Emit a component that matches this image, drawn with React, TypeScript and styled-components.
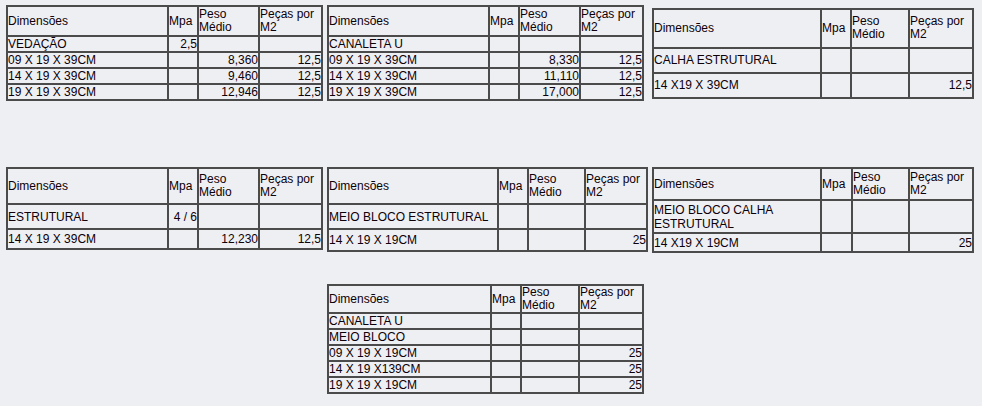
import React from "react";
import styled, { createGlobalStyle } from "styled-components";

const GlobalStyle = createGlobalStyle`
	body {
		margin: 0;
		background: #eeeff3;
	}
`;

const Page = styled.div`
	padding: 5px 0 0 6px;
	font-family: "Liberation Sans", Arial, sans-serif;
	font-size: 12px;
	color: #0d0008;
`;

const Row = styled.div<{ $top: number; $align: string }>`
	display: grid;
	grid-template-columns: 321px 325px 330px;
	align-items: ${(props) => props.$align};
	margin-top: ${(props) => props.$top}px;
`;

const Slot = styled.div<{ $col: number }>`
	grid-column: ${(props) => props.$col};
	display: flex;
`;

const Table = styled.table<{ $width: number }>`
	width: ${(props) => props.$width}px;
	table-layout: fixed;
	border-collapse: separate;
	border-spacing: 0;
	border: 1px solid #4b4b4b;
	box-sizing: border-box;
	font-size: 12px;
	line-height: 14px;
`;

const Line = styled.tr<{ $h: number }>`
	height: ${(props) => props.$h}px;
`;

const Cell = styled.td<{ $num?: boolean; $w?: number }>`
	border: 1px solid #4b4b4b;
	padding: 0;
	box-sizing: border-box;
	vertical-align: middle;
	text-align: ${(props) => (props.$num ? "right" : "left")};
	width: ${(props) => (props.$w ? props.$w + "px" : "auto")};
`;

const HeadCell = styled(Cell)`
	line-height: 13px;
`;

type Spec = {
	col: number;
	width: number;
	cols: number[];
	head: number;
	rows: { h: number; cells: string[] }[];
};

const HEAD = [["Dimensões"], ["Mpa"], ["Peso", "Médio"], ["Peças por", "M2"]];

const row1: Spec[] = [
	{
		col: 1,
		width: 317,
		cols: [161, 30, 61, 63],
		head: 30,
		rows: [
			{ h: 16, cells: ["VEDAÇÃO", "2,5", "", ""] },
			{ h: 16, cells: ["09 X 19 X 39CM", "", "8,360", "12,5"] },
			{ h: 16, cells: ["14 X 19 X 39CM", "", "9,460", "12,5"] },
			{ h: 16, cells: ["19 X 19 X 39CM", "", "12,946", "12,5"] },
		],
	},
	{
		col: 2,
		width: 317,
		cols: [161, 30, 61, 63],
		head: 30,
		rows: [
			{ h: 16, cells: ["CANALETA U", "", "", ""] },
			{ h: 16, cells: ["09 X 19 X 39CM", "", "8,330", "12,5"] },
			{ h: 16, cells: ["14 X 19 X 39CM", "", "11,110", "12,5"] },
			{ h: 16, cells: ["19 X 19 X 39CM", "", "17,000", "12,5"] },
		],
	},
	{
		col: 3,
		width: 322,
		cols: [168, 30, 58, 64],
		head: 39,
		rows: [
			{ h: 25, cells: ["CALHA ESTRUTURAL", "", "", ""] },
			{ h: 25, cells: ["14 X19 X 39CM", "", "", "12,5"] },
		],
	},
];

const row2: Spec[] = [
	{
		col: 1,
		width: 317,
		cols: [161, 30, 61, 63],
		head: 36,
		rows: [
			{ h: 25, cells: ["ESTRUTURAL", "4 / 6", "", ""] },
			{ h: 20, cells: ["14 X 19 X 39CM", "", "12,230", "12,5"] },
		],
	},
	{
		col: 2,
		width: 321,
		cols: [170, 30, 57, 62],
		head: 36,
		rows: [
			{ h: 25, cells: ["MEIO BLOCO ESTRUTURAL", "", "", ""] },
			{ h: 22, cells: ["14 X 19 X 19CM", "", "", "25"] },
		],
	},
	{
		col: 3,
		width: 322,
		cols: [168, 31, 57, 64],
		head: 32,
		rows: [
			{ h: 33, cells: ["MEIO BLOCO CALHA ESTRUTURAL", "", "", ""] },
			{ h: 19, cells: ["14 X19 X 19CM", "", "", "25"] },
		],
	},
];

const row3: Spec[] = [
	{
		col: 2,
		width: 317,
		cols: [163, 30, 58, 64],
		head: 28,
		rows: [
			{ h: 16, cells: ["CANALETA U", "", "", ""] },
			{ h: 16, cells: ["MEIO BLOCO", "", "", ""] },
			{ h: 16, cells: ["09 X 19 X 19CM", "", "", "25"] },
			{ h: 16, cells: ["14 X 19 X139CM", "", "", "25"] },
			{ h: 16, cells: ["19 X 19 X 19CM", "", "", "25"] },
		],
	},
];

function BlockTable({ spec }: { spec: Spec }) {
	return (
		<Slot $col={spec.col}>
			<Table $width={spec.width}>
				<tbody>
					<Line $h={spec.head}>
						{HEAD.map((lines, i) => (
							<HeadCell key={i} $w={spec.cols[i]}>
								{lines.map((t, j) => (
									<React.Fragment key={j}>
										{j > 0 && <br />}
										{t}
									</React.Fragment>
								))}
							</HeadCell>
						))}
					</Line>
					{spec.rows.map((r, i) => (
						<Line key={i} $h={r.h}>
							{r.cells.map((c, j) => (
								<Cell key={j} $num={j > 0}>
									{c}
								</Cell>
							))}
						</Line>
					))}
				</tbody>
			</Table>
		</Slot>
	);
}

export default function App() {
	return (
		<>
			<GlobalStyle />
			<Page>
				<Row $top={0} $align="center">
					{row1.map((s) => (
						<BlockTable key={s.col} spec={s} />
					))}
				</Row>
				<Row $top={66} $align="start">
					{row2.map((s) => (
						<BlockTable key={s.col} spec={s} />
					))}
				</Row>
				<Row $top={31} $align="start">
					{row3.map((s) => (
						<BlockTable key={s.col} spec={s} />
					))}
				</Row>
			</Page>
		</>
	);
}
